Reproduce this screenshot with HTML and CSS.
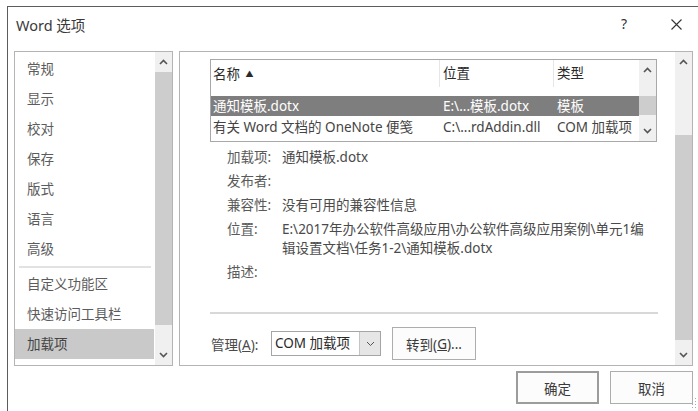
FILE: index.html
```html
<!DOCTYPE html>
<html lang="zh-CN">
<head>
<meta charset="utf-8">
<title>Word 选项</title>
<link rel="stylesheet" href="styles.css">
</head>
<body>
<div class="window">
  <header class="titlebar">
    <span class="title">Word 选项</span>
    <div class="caption">
      <span class="caption-help">?</span>
      <span class="caption-close">
        <svg width="11" height="11" viewBox="0 0 11 11"><path d="M0.5 0.5 L10.5 10.5 M10.5 0.5 L0.5 10.5" stroke="#333" stroke-width="1.1" fill="none"/></svg>
      </span>
    </div>
  </header>

  <div class="panes">
    <nav class="nav-pane">
      <ul class="nav-list">
        <li class="nav-item">常规</li>
        <li class="nav-item">显示</li>
        <li class="nav-item">校对</li>
        <li class="nav-item">保存</li>
        <li class="nav-item">版式</li>
        <li class="nav-item">语言</li>
        <li class="nav-item">高级</li>
        <li class="nav-sep"></li>
        <li class="nav-item">自定义功能区</li>
        <li class="nav-item">快速访问工具栏</li>
        <li class="nav-item is-active">加载项</li>
      </ul>
      <div class="vscroll">
        <div class="sb-btn"><svg width="9" height="6" viewBox="0 0 9 6"><path d="M1 5 L4.5 1.5 L8 5" stroke="#555" stroke-width="1.6" fill="none"/></svg></div>
        <div class="sb-track"><div class="sb-thumb" style="margin-top:0;height:253px"></div></div>
        <div class="sb-btn"><svg width="9" height="6" viewBox="0 0 9 6"><path d="M1 1 L4.5 4.5 L8 1" stroke="#555" stroke-width="1.6" fill="none"/></svg></div>
      </div>
    </nav>

    <section class="main-pane">
      <div class="main-content">
        <div class="listview">
          <div class="lv-main">
            <div class="lv-header">
              <div class="lv-cell">名称 <span class="sort-mark">▲</span></div>
              <div class="lv-cell">位置</div>
              <div class="lv-cell">类型</div>
            </div>
            <div class="lv-rows">
              <div class="lv-row is-selected">
                <div class="lv-cell">通知模板.dotx</div>
                <div class="lv-cell">E:\...模板.dotx</div>
                <div class="lv-cell">模板</div>
              </div>
              <div class="lv-row">
                <div class="lv-cell">有关 Word 文档的 OneNote 便笺</div>
                <div class="lv-cell">C:\...rdAddin.dll</div>
                <div class="lv-cell">COM 加载项</div>
              </div>
            </div>
          </div>
          <div class="vscroll">
            <div class="sb-btn"><svg width="9" height="6" viewBox="0 0 9 6"><path d="M1 5 L4.5 1.5 L8 5" stroke="#555" stroke-width="1.6" fill="none"/></svg></div>
            <div class="sb-track"><div class="sb-thumb" style="margin-top:16px;height:19px"></div></div>
            <div class="sb-btn"><svg width="9" height="6" viewBox="0 0 9 6"><path d="M1 1 L4.5 4.5 L8 1" stroke="#555" stroke-width="1.6" fill="none"/></svg></div>
          </div>
        </div>

        <dl class="details">
          <dt>加载项:</dt><dd>通知模板.dotx</dd>
          <dt>发布者:</dt><dd></dd>
          <dt>兼容性:</dt><dd>没有可用的兼容性信息</dd>
          <dt>位置:</dt><dd>E:\2017年办公软件高级应用\办公软件高级应用案例\单元1编<br>辑设置文档\任务1-2\通知模板.dotx</dd>
          <dt>描述:</dt><dd></dd>
        </dl>

        <div class="spacer"></div>
        <div class="rule"></div>

        <div class="manage">
          <span class="manage-label">管理(<u>A</u>):</span>
          <div class="combo">
            <span class="combo-value">COM 加载项</span>
            <span class="combo-btn"><svg width="9" height="6" viewBox="0 0 9 6"><path d="M1 1 L4.5 4.5 L8 1" stroke="#555" stroke-width="1" fill="none"/></svg></span>
          </div>
          <button type="button" class="btn btn-go">转到(<u>G</u>)...</button>
        </div>
      </div>
      <div class="vscroll">
        <div class="sb-btn"><svg width="9" height="6" viewBox="0 0 9 6"><path d="M1 5 L4.5 1.5 L8 5" stroke="#555" stroke-width="1.6" fill="none"/></svg></div>
        <div class="sb-track"><div class="sb-thumb" style="margin-top:63px;height:205px"></div></div>
        <div class="sb-btn"><svg width="9" height="6" viewBox="0 0 9 6"><path d="M1 1 L4.5 4.5 L8 1" stroke="#555" stroke-width="1.6" fill="none"/></svg></div>
      </div>
    </section>
  </div>

  <footer class="dialog-buttons">
    <button type="button" class="btn btn-dialog is-default">确定</button>
    <button type="button" class="btn btn-dialog">取消</button>
  </footer>

  <svg class="grip" width="6" height="12" viewBox="0 0 6 12">
    <rect x="4" y="0" width="1" height="1" fill="#aaa"/>
    <rect x="4" y="3" width="1" height="1" fill="#aaa"/>
    <rect x="1" y="6" width="1" height="1" fill="#aaa"/>
    <rect x="4" y="6" width="1" height="1" fill="#aaa"/>
    <rect x="1" y="9" width="1" height="1" fill="#aaa"/>
    <rect x="4" y="9" width="1" height="1" fill="#aaa"/>
  </svg>
</div>
</body>
</html>
```

FILE: styles.css
```css
* {
  box-sizing: border-box;
}

html,
body {
  margin: 0;
}

body {
  width: 698px;
  height: 411px;
  overflow: hidden;
  background: #fff;
  font-family: "Noto Sans", "Noto Sans CJK SC", sans-serif;
  font-size: 13.5px;
  color: #444;
}

/* dialog frame */
.window {
  position: relative;
  margin: 6px 0 0 7px;
  height: 405px;
  border-top: 1px solid #5c5c5c;
  border-left: 1px solid #5c5c5c;
}

.titlebar {
  display: flex;
  justify-content: space-between;
  height: 44px;
  padding: 8px 0 0 8px;
}

.title {
  font-size: 14.5px;
  line-height: 20px;
  color: #3a3a3a;
}

.caption {
  display: flex;
  gap: 15px;
  margin-top: -1px;
}

.caption-help {
  width: 30px;
  text-align: center;
  line-height: 20px;
  font-size: 14px;
  color: #333;
}

.caption-close {
  width: 44px;
  height: 20px;
  display: flex;
  align-items: center;
  justify-content: center;
}

/* two panes */
.panes {
  display: flex;
  gap: 6px;
  margin-left: 6px;
  height: 315px;
}

.nav-pane {
  width: 159px;
  border: 1px solid #b4b4b4;
  display: flex;
}

.nav-list {
  flex: 1;
  list-style: none;
  margin: 0;
  padding: 2px 1px 0 0;
}

.nav-item {
  height: 30px;
  line-height: 30px;
  padding-left: 12px;
  color: #5c5c5c;
  white-space: nowrap;
}

.nav-item.is-active {
  background: #c9c9c9;
  color: #444;
}

.nav-sep {
  height: 5px;
  padding: 2px 3px 1px 4px;
}

.nav-sep::after {
  content: "";
  display: block;
  height: 2px;
  background: #e2e2e2;
}

/* scrollbars */
.vscroll {
  width: 17px;
  flex: none;
  display: flex;
  flex-direction: column;
  background: #f0f0f0;
}

.sb-btn {
  height: 20px;
  flex: none;
  display: flex;
  align-items: center;
  justify-content: center;
}

.sb-track {
  flex: 1;
}

.sb-thumb {
  background: #cdcdcd;
}

/* right pane */
.main-pane {
  width: 514px;
  border: 1px solid #b4b4b4;
  display: flex;
}

.main-content {
  flex: 1;
  display: flex;
  flex-direction: column;
  padding: 7px 0 5px 0;
}

.listview {
  margin-left: 30px;
  width: 447px;
  height: 83px;
  border: 1px solid #a8a8a8;
  display: flex;
}

.lv-main {
  flex: 1;
  overflow: hidden;
}

.lv-header,
.lv-row {
  display: grid;
  grid-template-columns: 229px 114px 1fr;
}

.lv-header {
  height: 27px;
}

.lv-header .lv-cell {
  line-height: 27px;
  color: #2a2a2a;
  border-right: 1px solid #e6e6e6;
}

.lv-header .lv-cell:last-child {
  border-right: none;
}

.lv-cell {
  padding-left: 3px;
  white-space: nowrap;
  overflow: hidden;
}

.lv-cell:first-child {
  padding-left: 2px;
}

.sort-mark {
  font-size: 8px;
  vertical-align: 2px;
  margin-left: 2px;
}

.lv-rows {
  padding-top: 9px;
}

.lv-row {
  height: 22px;
  line-height: 23px;
  color: #444;
}

.lv-row.is-selected {
  height: 20px;
  line-height: 21px;
  background: #7e7e7e;
  color: #fff;
}

.details {
  margin: 6px 0 0 47px;
  display: grid;
  grid-template-columns: 55px 1fr;
  row-gap: 5px;
  line-height: 19px;
}

.details dt {
  color: #5a5a5a;
}

.details dd {
  margin: 0;
  color: #4a4a4a;
  white-space: nowrap;
}

.spacer {
  flex: 1;
}

.rule {
  margin-left: 30px;
  width: 448px;
  height: 2px;
  background: #d8d8d8;
}

.manage {
  margin-top: 13px;
  height: 33px;
  padding-left: 31px;
  display: flex;
  align-items: center;
}

.manage-label {
  width: 60px;
  color: #4a4a4a;
}

.combo {
  width: 110px;
  height: 25px;
  border: 1px solid #a5a5a5;
  display: flex;
}

.combo-value {
  flex: 1;
  padding-left: 3px;
  line-height: 23px;
  color: #2a2a2a;
}

.combo-btn {
  width: 21px;
  background: #e6e6e6;
  border-left: 1px solid #c4c4c4;
  display: flex;
  align-items: center;
  justify-content: center;
}

.btn {
  font: inherit;
  color: #3a3a3a;
  background: #fcfcfc;
  border: 1px solid #adadad;
  padding: 0;
  height: 33px;
  display: flex;
  align-items: center;
  justify-content: center;
}

.btn-go {
  width: 84px;
  margin-left: 11px;
}

/* bottom buttons */
.dialog-buttons {
  display: flex;
  justify-content: flex-end;
  gap: 11px;
  margin-top: 5px;
  padding-right: 5px;
}

.btn-dialog {
  width: 83px;
}

.btn-dialog.is-default {
  border: 2px solid #9c9c9c;
}

.grip {
  position: absolute;
  right: 1px;
  bottom: 1px;
}
```
